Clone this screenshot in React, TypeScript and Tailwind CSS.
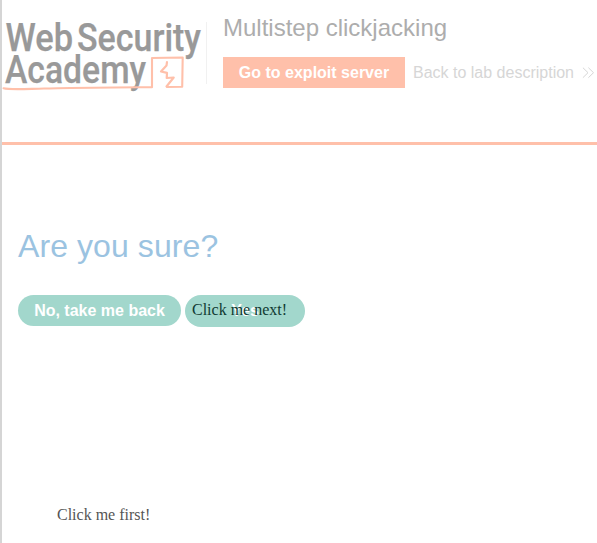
function Logo() {
  return (
    <svg width="202" height="77" viewBox="0 0 202 77" className="block shrink-0 overflow-visible" role="img" aria-label="Web Security Academy">
      <g fill="#999999" stroke="#999999" strokeWidth=".25" fontFamily="Roboto, sans-serif" fontSize="38" fontWeight="500">
        <text x="3.5" y="34.7" textLength="67.5" lengthAdjust="spacingAndGlyphs">Web</text>
        <text x="75" y="34.7" textLength="124" lengthAdjust="spacingAndGlyphs">Security</text>
        <text x="3" y="67.2" textLength="141" lengthAdjust="spacingAndGlyphs">Academy</text>
      </g>
      <g fill="none" stroke="#ffc0aa" strokeLinecap="round" strokeLinejoin="round">
        <path strokeWidth="2.1" d="M1.5 72.3C8 74 22 73 42 72.5C85 71.7 116 71 150 71.3V42L180.7 41.5L180.2 70.7L165 71" />
        <path strokeWidth="2.2" d="M165 46L164.5 49.5L159 55.5L165 56.8L164.7 62L171.7 61.5L164.5 70.5" />
      </g>
    </svg>
  );
}

function Chevrons() {
  return (
    <svg width="12" height="12" viewBox="0 0 12 12" className="ml-2" fill="none" stroke="#d6d6d6">
      <path d="M.9.7 6 5.7.9 10.7M6.4.7 11.5 5.7 6.4 10.7" />
    </svg>
  );
}

export default function App() {
  return (
    <div className="relative h-[543px] w-[597px] overflow-hidden border-l-2 border-[#d5d5d5] bg-white font-['Liberation_Sans',Arial,sans-serif]">
      <header className="flex h-[145px] border-b-3 border-[#ffc0aa] pt-4">
        <Logo />
        <div className="mt-[6px] ml-[2px] h-[62px] w-px bg-[#f1f1f1]" />
        <div className="ml-4 whitespace-nowrap">
          <h1 className="text-2xl leading-6 text-[#adadad]">Multistep clickjacking</h1>
          <div className="mt-[17px] flex h-[31px] items-center">
            <button className="h-[31px] w-[182px] bg-[#ffc0aa] text-base font-bold text-white">Go to exploit server</button>
            <a className="ml-2 flex items-center text-base text-[#d6d6d6]">Back to lab description<Chevrons /></a>
          </div>
        </div>
      </header>
      <main className="px-4 pt-[83px]">
        <h2 className="text-[32px] leading-9 tracking-[0.08px] text-[#9bc3e1]">Are you sure?</h2>
        <div className="mt-[31px] flex gap-1 text-base font-bold text-white">
          <button className="h-[31px] w-[163px] rounded-full bg-[#a2d7cc]">No, take me back</button>
          <button className="h-8 w-[120px] rounded-full bg-[#a2d7cc]">Yes</button>
        </div>
      </main>
      <span className="absolute top-[301px] left-[190px] font-['Liberation_Serif','Times_New_Roman',serif] text-base leading-[18px] whitespace-nowrap text-[#103a32]">Click me next!</span>
      <span className="absolute top-[506px] left-[55px] font-['Liberation_Serif','Times_New_Roman',serif] text-base leading-[18px] whitespace-nowrap text-[#555555]">Click me first!</span>
    </div>
  );
}
